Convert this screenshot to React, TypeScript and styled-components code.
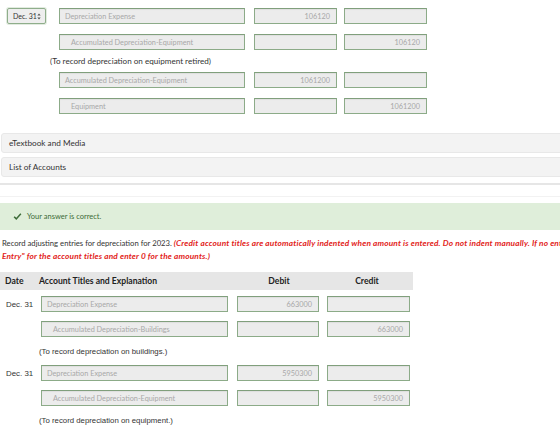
import React from "react";
import styled, { createGlobalStyle } from "styled-components";

const Global = createGlobalStyle`
  html, body {
    margin: 0;
    padding: 0;
    background: #ffffff;
    overflow: hidden;
  }
  body {
    width: 560px;
    height: 425px;
    font-family: Lato, "Open Sans", Arial, sans-serif;
    color: #333333;
  }
`;

const Page = styled.div`
  width: 560px;
  overflow: hidden;
`;

/* ---------- journal rows ---------- */

const EntryBlock = styled.div<{ $top: number }>`
  display: flex;
  flex-direction: column;
  padding-top: ${(p) => p.$top}px;
`;

const Row = styled.div<{ $gap: number }>`
  display: flex;
  align-items: center;
  height: 16px;
  margin-bottom: ${(p) => p.$gap}px;
`;

const DateCell = styled.div<{ $w: number; $pad: number }>`
  width: ${(p) => p.$w}px;
  padding-left: ${(p) => p.$pad}px;
  box-sizing: border-box;
  flex: none;
  display: flex;
  align-items: center;
`;

const DateText = styled.span`
  font-family: "Liberation Sans", Arial, sans-serif;
  font-size: 7.9px;
  color: #333;
`;

const DateSelect = styled.div`
  width: 39px;
  height: 16px;
  box-sizing: border-box;
  border: 1px solid #8fae8b;
  border-radius: 2px;
  background: #eeeeee;
  display: flex;
  align-items: center;
  justify-content: space-between;
  padding: 0 4px 0 5px;
  font-size: 7px;
  color: #333;
  box-shadow: 0 0 0 1px #e2ebe0;
  white-space: nowrap;
`;

/* up/down chevrons of the native select */
const SelectArrows = () => (
  <svg width="4" height="7" viewBox="0 0 4 7" aria-hidden>
    <path d="M0.3 2.6 L2 0.6 L3.7 2.6 Z M0.3 4.4 L2 6.4 L3.7 4.4 Z" fill="#555" />
  </svg>
);

const Field = styled.div<{ $w: number; $mr: number; $indent?: boolean; $right?: boolean }>`
  width: ${(p) => p.$w}px;
  margin-right: ${(p) => p.$mr}px;
  height: 16px;
  flex: none;
  box-sizing: border-box;
  border: 1px solid #8cab88;
  border-top-color: #809f7c;
  background: #ececec;
  box-shadow: inset 0 1px 1px rgba(0, 0, 0, 0.06);
  display: flex;
  align-items: center;
  justify-content: ${(p) => (p.$right ? "flex-end" : "flex-start")};
  padding: ${(p) => (p.$right ? "0 6px 0 0" : p.$indent ? "0 0 0 11px" : "0 0 0 5px")};
  font-size: 7.3px;
  color: #a8a8a8;
  white-space: nowrap;
`;

const Note = styled.div<{ $left: number; $h: number; $alt?: boolean }>`
  height: ${(p) => p.$h}px;
  padding-left: ${(p) => p.$left}px;
  display: flex;
  align-items: center;
  font-family: ${(p) => (p.$alt ? `"Liberation Sans", Arial, sans-serif` : `Lato, sans-serif`)};
  font-size: ${(p) => (p.$alt ? 7.8 : 8.1)}px;
  color: #333;
  white-space: nowrap;
`;

/* ---------- collapsible bars ---------- */

const Bars = styled.div`
  margin-top: 19px;
  display: flex;
  flex-direction: column;
  gap: 4px;
  padding-left: 1px;
`;

const Bar = styled.div`
  width: 600px;
  height: 20px;
  box-sizing: border-box;
  background: #f3f3f3;
  border: 1px solid #e8e8e8;
  border-radius: 3px;
  display: flex;
  align-items: center;
  padding-left: 7px;
  font-size: 8.2px;
  color: #333;
`;

const Divider = styled.div<{ $mt: number; $c: string; $h: number }>`
  margin-top: ${(p) => p.$mt}px;
  height: ${(p) => p.$h}px;
  background: ${(p) => p.$c};
  width: 600px;
`;

const Success = styled.div`
  margin-top: 6px;
  width: 600px;
  height: 27px;
  background: #dfeeda;
  display: flex;
  align-items: center;
  padding-left: 13px;
  gap: 5px;
  font-size: 7.5px;
  color: #3c6b38;
`;

/* ---------- instructions and table ---------- */

const Instructions = styled.p`
  margin: 7px 0 0 2px;
  width: 900px;
  font-size: 7.7px;
  line-height: 13px;
  color: #333;
  white-space: nowrap;
`;

const Emph = styled.em`
  color: #e2231a;
  font-weight: 700;
  font-size: 8.3px;
  letter-spacing: 0.15px;
`;

const HeaderRow = styled.div`
  margin-top: 9px;
  width: 413px;
  height: 18px;
  background: #e6e6e6;
  display: flex;
  align-items: center;
  font-size: 8.6px;
  font-weight: 700;
  color: #222;
`;

const HeadCell = styled.div<{ $w: number; $center?: boolean; $pad?: number }>`
  width: ${(p) => p.$w}px;
  flex: none;
  box-sizing: border-box;
  padding-left: ${(p) => p.$pad ?? 0}px;
  text-align: ${(p) => (p.$center ? "center" : "left")};
  white-space: nowrap;
`;

const Check = () => (
  <svg width="9" height="8" viewBox="0 0 9 8" aria-hidden>
    <path d="M0.6 4.3 L3.3 6.9 L8.4 1.2 L7.3 0.3 L3.3 4.8 L1.7 3.2 Z" fill="#3d6b39" />
  </svg>
);

type Line = { account: string; debit?: string; credit?: string; indent?: boolean };

const topEntries: { lines: Line[]; note?: string }[] = [
  {
    lines: [
      { account: "Depreciation Expense", debit: "106120" },
      { account: "Accumulated Depreciation-Equipment", credit: "106120", indent: true },
    ],
    note: "(To record depreciation on equipment retired)",
  },
  {
    lines: [
      { account: "Accumulated Depreciation-Equipment", debit: "1061200" },
      { account: "Equipment", credit: "1061200", indent: true },
    ],
  },
];

const bottomEntries: { lines: Line[]; note: string }[] = [
  {
    lines: [
      { account: "Depreciation Expense", debit: "663000" },
      { account: "Accumulated Depreciation-Buildings", credit: "663000", indent: true },
    ],
    note: "(To record depreciation on buildings.)",
  },
  {
    lines: [
      { account: "Depreciation Expense", debit: "5950300" },
      { account: "Accumulated Depreciation-Equipment", credit: "5950300", indent: true },
    ],
    note: "(To record depreciation on equipment.)",
  },
];

export default function App() {
  return (
    <Page>
      <Global />

      <EntryBlock $top={8}>
        {topEntries.map((entry, i) => (
          <React.Fragment key={i}>
            {entry.lines.map((line, j) => (
              <Row $gap={j === 0 ? 10 : 0} key={j}>
                <DateCell $w={59} $pad={7}>
                  {i === 0 && j === 0 && (
                    <DateSelect>
                      <span>Dec. 31</span>
                      <SelectArrows />
                    </DateSelect>
                  )}
                </DateCell>
                <Field $w={186} $mr={9} $indent={line.indent}>{line.account}</Field>
                <Field $w={83} $mr={7} $right>{line.debit ?? ""}</Field>
                <Field $w={83} $mr={0} $right>{line.credit ?? ""}</Field>
              </Row>
            ))}
            {entry.note && (
              <Note $left={50} $h={22}>{entry.note}</Note>
            )}
          </React.Fragment>
        ))}
      </EntryBlock>

      <Bars>
        <Bar>eTextbook and Media</Bar>
        <Bar>List of Accounts</Bar>
      </Bars>
      <Divider $mt={6} $c="#e6e6e6" $h={2} />
      <Divider $mt={11} $c="#f2f2f2" $h={1} />

      <Success>
        <Check />
        <span>Your answer is correct.</span>
      </Success>

      <Instructions>
        Record adjusting entries for depreciation for 2023.{" "}
        <Emph>
          (Credit account titles are automatically indented when amount is entered. Do not indent
          manually. If no entry is required, select "No
          <br />
          Entry" for the account titles and enter 0 for the amounts.)
        </Emph>
      </Instructions>

      <HeaderRow>
        <HeadCell $w={39} $pad={5}>Date</HeadCell>
        <HeadCell $w={198}>Account Titles and Explanation</HeadCell>
        <HeadCell $w={84} $center>Debit</HeadCell>
        <HeadCell $w={92} $center>Credit</HeadCell>
      </HeaderRow>

      <EntryBlock $top={6}>
        {bottomEntries.map((entry, i) => (
          <React.Fragment key={i}>
            {entry.lines.map((line, j) => (
              <Row $gap={j === 0 ? 9 : 0} key={j}>
                <DateCell $w={41} $pad={6}>
                  {j === 0 && <DateText>Dec. 31</DateText>}
                </DateCell>
                <Field $w={187} $mr={9} $indent={line.indent}>{line.account}</Field>
                <Field $w={82} $mr={8} $right>{line.debit ?? ""}</Field>
                <Field $w={83} $mr={0} $right>{line.credit ?? ""}</Field>
              </Row>
            ))}
            <Note $left={39} $h={28} $alt>{entry.note}</Note>
          </React.Fragment>
        ))}
      </EntryBlock>
    </Page>
  );
}
